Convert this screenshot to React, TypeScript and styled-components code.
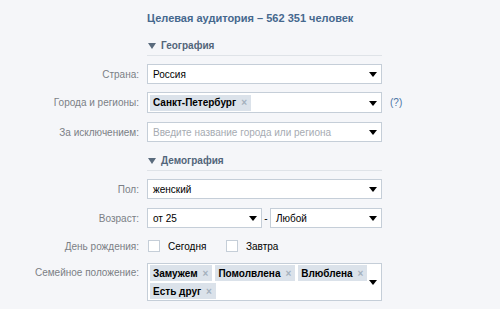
import React from "react";
import styled, { createGlobalStyle } from "styled-components";

const GlobalStyle = createGlobalStyle`
  html, body {
    margin: 0;
    padding: 0;
    background: #f5f6f9;
  }
  body {
    font-family: "Liberation Sans", Arial, sans-serif;
    font-size: 10px;
    color: #000;
  }
`;

const Page = styled.div`
  width: 500px;
  height: 309px;
  overflow: hidden;
  padding-top: 11px;
  box-sizing: border-box;
`;

const Column = styled.div`
  margin-left: 147px;
  width: 235px;
`;

const Title = styled.div`
  font-size: 11px;
  font-weight: bold;
  color: #45688e;
  line-height: 15px;
`;

const SectionHead = styled.div<{ top: number }>`
  margin-top: ${(p) => p.top}px;
  height: 20px;
  border-bottom: 1px solid #dfe3e8;
  display: flex;
  align-items: center;
  gap: 5px;
  padding-left: 1px;
  font-weight: bold;
  font-size: 10px;
  color: #52657a;
  &::before {
    content: "";
    width: 0;
    height: 0;
    border-left: 4px solid transparent;
    border-right: 4px solid transparent;
    border-top: 6px solid #5a6b7d;
    margin-top: 1px;
  }
`;

const Row = styled.div<{ top: number; align?: string }>`
  display: grid;
  grid-template-columns: 139px 235px auto;
  column-gap: 8px;
  align-items: ${(p) => p.align || "center"};
  margin-top: ${(p) => p.top}px;
`;

const Label = styled.div<{ pad?: number }>`
  text-align: right;
  color: #7b7f85;
  padding-top: ${(p) => p.pad || 0}px;
`;

const Box = styled.div<{ h?: number }>`
  position: relative;
  box-sizing: border-box;
  min-height: ${(p) => p.h || 20}px;
  background: #fff;
  border: 1px solid #c5ced8;
  padding: 1px 8px 1px 2px;
  display: flex;
  flex-wrap: wrap;
  align-items: center;
  gap: 2px 3px;
`;

const Value = styled.span<{ muted?: boolean }>`
  padding-left: 3px;
  color: ${(p) => (p.muted ? "#a6abb2" : "#000")};
  white-space: nowrap;
`;

const Arrow = styled.span`
  position: absolute;
  right: 4px;
  top: 50%;
  margin-top: -2px;
  width: 0;
  height: 0;
  border-left: 4px solid transparent;
  border-right: 4px solid transparent;
  border-top: 5px solid #000;
`;

const Token = styled.span`
  display: inline-flex;
  align-items: center;
  gap: 5px;
  height: 16px;
  padding: 0 4px 0 3px;
  background: #dbe2ea;
  font-weight: bold;
  color: #000;
  white-space: nowrap;
`;

const Cross = styled.span`
  color: #a3b0bd;
  font-size: 10px;
  font-weight: bold;
`;

const Help = styled.span`
  color: #4a74a5;
`;

const Pair = styled.div`
  display: grid;
  grid-template-columns: 115px 8px 112px;
  align-items: center;
  text-align: center;
`;

const Checks = styled.div`
  display: flex;
  align-items: center;
  height: 16px;
`;

const CheckItem = styled.label<{ width: number }>`
  display: flex;
  align-items: center;
  gap: 8px;
  width: ${(p) => p.width}px;
  padding-left: 1px;
  box-sizing: border-box;
`;

const CheckBox = styled.span`
  width: 12px;
  height: 12px;
  box-sizing: border-box;
  background: #fff;
  border: 1px solid #c5ced8;
`;

const Select = ({
  children,
  h,
}: {
  children: React.ReactNode;
  h?: number;
}) => (
  <Box h={h}>
    {children}
    <Arrow />
  </Box>
);

const Chip = ({ text }: { text: string }) => (
  <Token>
    {text}
    <Cross>×</Cross>
  </Token>
);

export default function App() {
  return (
    <Page>
      <GlobalStyle />
      <Column>
        <Title>Целевая аудитория – 562 351 человек</Title>
        <SectionHead top={9}>География</SectionHead>
      </Column>

      <Row top={8}>
        <Label>Страна:</Label>
        <Select>
          <Value>Россия</Value>
        </Select>
      </Row>
      <Row top={8}>
        <Label>Города и регионы:</Label>
        <Select h={21}>
          <Chip text="Санкт-Петербург" />
        </Select>
        <Help>(?)</Help>
      </Row>
      <Row top={9}>
        <Label>За исключением:</Label>
        <Select>
          <Value muted>Введите название города или региона</Value>
        </Select>
      </Row>

      <Column>
        <SectionHead top={8}>Демография</SectionHead>
      </Column>

      <Row top={8}>
        <Label>Пол:</Label>
        <Select>
          <Value>женский</Value>
        </Select>
      </Row>
      <Row top={9}>
        <Label>Возраст:</Label>
        <Pair>
          <Select>
            <Value>от 25</Value>
          </Select>
          <span>-</span>
          <Select>
            <Value>Любой</Value>
          </Select>
        </Pair>
      </Row>
      <Row top={10}>
        <Label>День рождения:</Label>
        <Checks>
          <CheckItem width={78}>
            <CheckBox />
            Сегодня
          </CheckItem>
          <CheckItem width={80}>
            <CheckBox />
            Завтра
          </CheckItem>
        </Checks>
      </Row>
      <Row top={9} align="start">
        <Label pad={4}>Семейное положение:</Label>
        <Select h={36}>
          <Chip text="Замужем" />
          <Chip text="Помолвлена" />
          <Chip text="Влюблена" />
          <Chip text="Есть друг" />
        </Select>
      </Row>
    </Page>
  );
}
